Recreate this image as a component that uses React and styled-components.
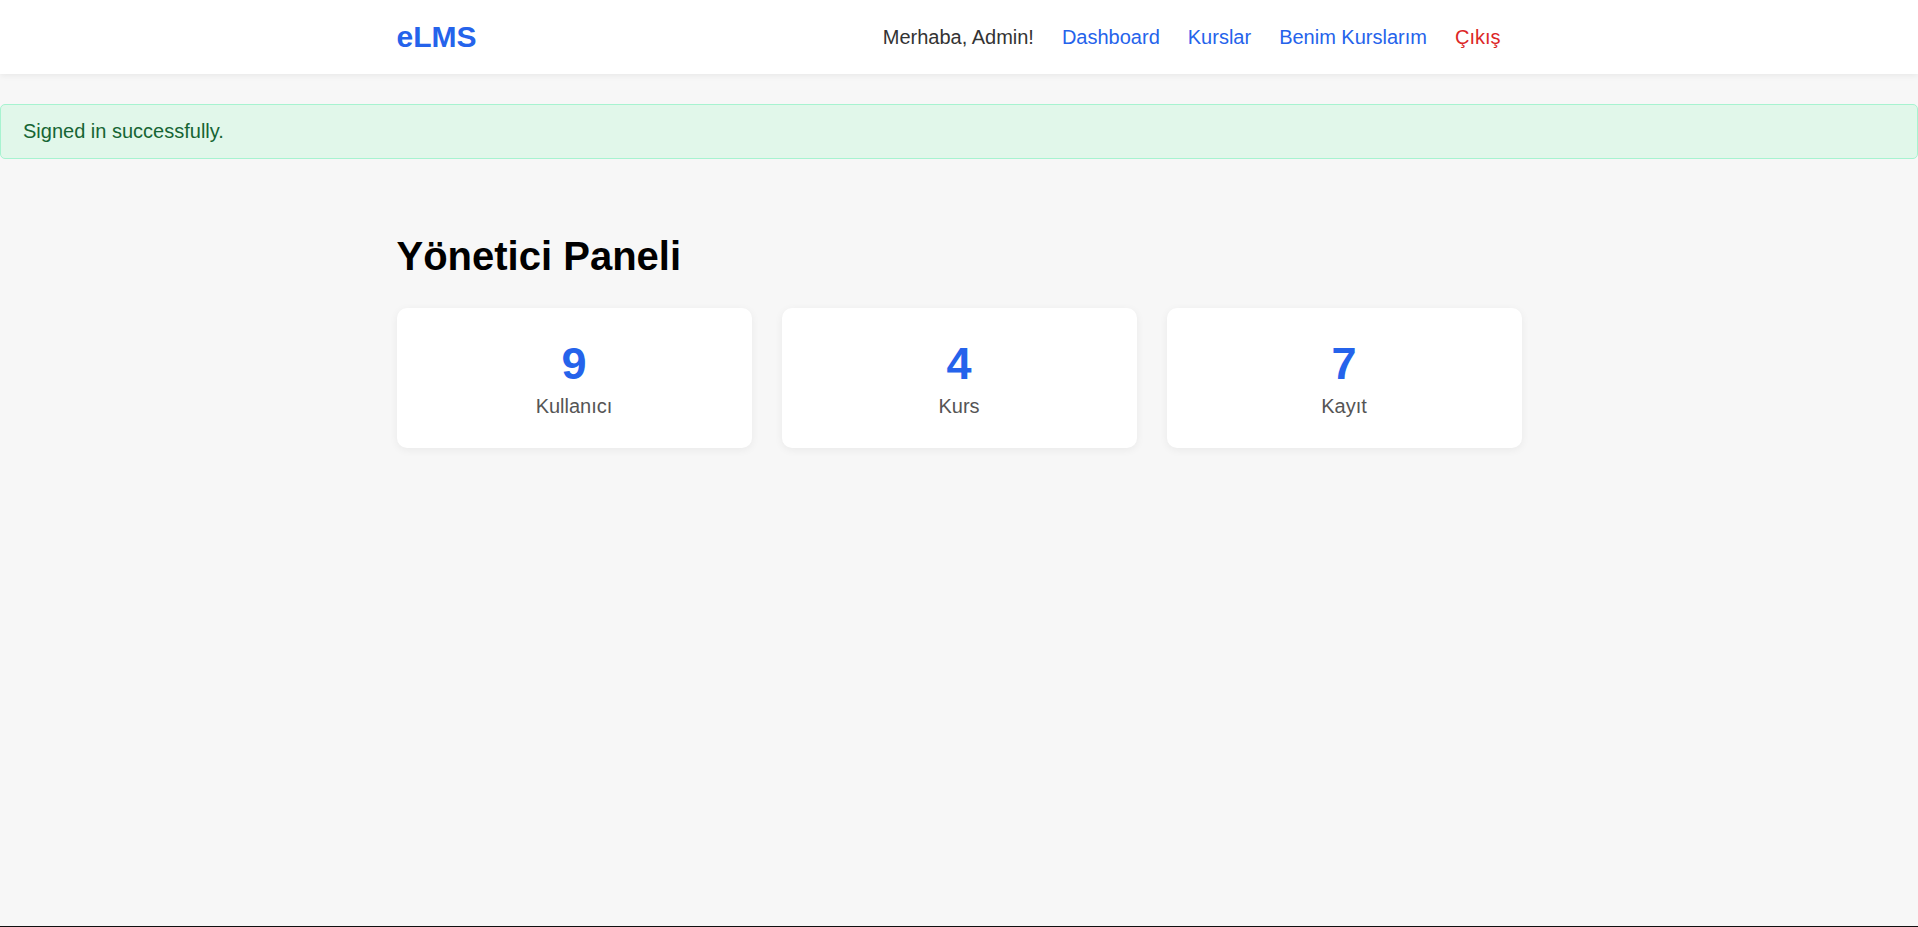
import React from 'react';
import styled, { createGlobalStyle } from 'styled-components';

// sayfa geneli
const GlobalStyle = createGlobalStyle`
  * { box-sizing: border-box; }
  body {
    margin: 0;
    background: #f7f7f7;
    font-family: "Liberation Sans", Arial, sans-serif;
    font-size: 20px;
    color: #000;
  }
`;

const Page = styled.div`
  min-height: 100vh;
  border-bottom: 1px solid #111;
`;

const Header = styled.header`
  background: #fff;
  box-shadow: 0 2px 6px rgba(0, 0, 0, 0.06);
`;

const HeaderInner = styled.div`
  max-width: 1125px;
  margin: 0 auto;
  padding: 20px 21px 20px 0;
  display: flex;
  align-items: center;
  justify-content: space-between;
`;

const Logo = styled.a`
  font-size: 30px;
  font-weight: bold;
  color: #2563eb;
  text-decoration: none;
`;

const Nav = styled.nav`
  display: flex;
  align-items: center;
  gap: 28px;
`;

const Greeting = styled.span`
  color: #333;
`;

const NavLink = styled.a`
  color: ${props => (props.danger ? '#dc2626' : '#2563eb')};
  text-decoration: none;
`;

const Flash = styled.div`
  margin-top: 30px;
  padding: 15px 22px;
  background: #e1f7ea;
  border: 1px solid #a7f3d0;
  border-radius: 5px;
  color: #166534;
`;

const Container = styled.main`
  max-width: 1125px;
  margin: 0 auto;
  padding-top: 48px;
`;

const Title = styled.h1`
  font-size: 40px;
  font-weight: bold;
  color: #000;
  margin: 27px 0 29px;
`;

const StatGrid = styled.div`
  display: grid;
  grid-template-columns: repeat(3, 1fr);
  gap: 30px;
`;

const StatCard = styled.div`
  background: #fff;
  border-radius: 10px;
  padding: 30px;
  text-align: center;
  box-shadow: 0 2px 8px rgba(0, 0, 0, 0.06);
`;

const StatNumber = styled.div`
  font-size: 45px;
  font-weight: bold;
  color: #2563eb;
`;

const StatLabel = styled.div`
  margin-top: 5px;
  color: #555;
`;

const stats = [
  { value: 9, label: 'Kullanıcı' },
  { value: 4, label: 'Kurs' },
  { value: 7, label: 'Kayıt' },
];

export default function App() {
  return (
    <Page>
      <GlobalStyle />
      <Header>
        <HeaderInner>
          <Logo href="#">eLMS</Logo>
          <Nav>
            <Greeting>Merhaba, Admin!</Greeting>
            <NavLink href="#">Dashboard</NavLink>
            <NavLink href="#">Kurslar</NavLink>
            <NavLink href="#">Benim Kurslarım</NavLink>
            <NavLink href="#" danger>Çıkış</NavLink>
          </Nav>
        </HeaderInner>
      </Header>

      <Flash>Signed in successfully.</Flash>

      <Container>
        <Title>Yönetici Paneli</Title>
        <StatGrid>
          {stats.map(s => (
            <StatCard key={s.label}>
              <StatNumber>{s.value}</StatNumber>
              <StatLabel>{s.label}</StatLabel>
            </StatCard>
          ))}
        </StatGrid>
      </Container>
    </Page>
  );
}
